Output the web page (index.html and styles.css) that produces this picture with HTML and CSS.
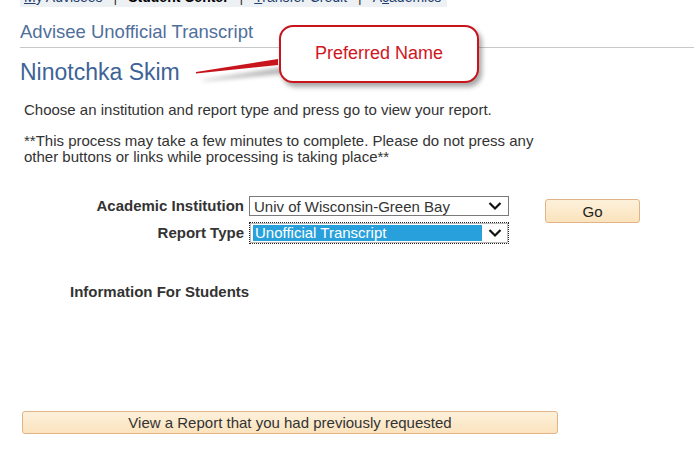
FILE: index.html
```html
<!DOCTYPE html>
<html>
<head>
<meta charset="utf-8">
<link rel="stylesheet" href="styles.css">
</head>
<body>
<div class="page">
  <div class="nav">
    <div class="nav-inner">
      <span><u>M</u>y Advisees</span><span class="sep">|</span><b>Student Center</b><span class="sep">|</span><span><u>T</u>ransfer Credit</span><span class="sep">|</span><span>A<u>c</u>ademics</span>
    </div>
  </div>
  <div class="title">Advisee Unofficial Transcript</div>
  <div class="name">Ninotchka Skim</div>
  <p class="intro">Choose an institution and report type and press go to view your report.</p>
  <p class="warn">**This process may take a few minutes to complete. Please do not press any other buttons or links while processing is taking place**</p>

  <div class="form">
    <div class="label">Academic Institution</div>
    <div class="select">
      <span class="val">Univ of Wisconsin-Green Bay</span>
      <svg class="chev" width="14" height="10" viewBox="0 0 14 10"><path d="M1.5 2 L7 7.5 L12.5 2" fill="none" stroke="#111" stroke-width="2.2"/></svg>
    </div>
    <div class="go">Go</div>
    <div class="label">Report Type</div>
    <div class="select focus">
      <span class="val sel">Unofficial Transcript</span>
      <svg class="chev" width="14" height="10" viewBox="0 0 14 10"><path d="M1.5 2 L7 7.5 L12.5 2" fill="none" stroke="#111" stroke-width="2.2"/></svg>
    </div>
  </div>

  <div class="info">Information For Students</div>
  <div class="view-btn">View a Report that you had previously requested</div>

  <svg class="pointer" width="100" height="40" viewBox="0 0 100 40">
    <defs>
      <filter id="sh" x="-20%" y="-50%" width="140%" height="300%"><feGaussianBlur stdDeviation="2"/></filter>
    </defs>
    <polygon points="4,30 84,17 84,24 4,31" fill="#888" opacity="0.6" filter="url(#sh)" transform="translate(3,5)"/>
    <polygon points="0,27 82,14 82,20 0,28.5" fill="#c8141c"/>
  </svg>
  <div class="callout">Preferred Name</div>
</div>
</body>
</html>
```
FILE: styles.css
```css
html, body {
  margin: 0;
  padding: 0;
  background: #fff;
}
body {
  font-family: "Liberation Sans", Arial, sans-serif;
  color: #333;
}
.page {
  position: relative;
  width: 694px;
  height: 460px;
  overflow: hidden;
}
.nav {
  margin-left: 20px;
  width: 427px;
  height: 7px;
  background: #eef1f4;
  overflow: hidden;
}
.nav-inner {
  margin-top: -11px;
  padding-left: 4px;
  font-size: 14px;
  line-height: 16px;
  color: #1f3f6f;
  white-space: nowrap;
}
.nav-inner b { color: #000; }
.nav-inner .sep { margin: 0 11px; color: #333; }
.title {
  margin: 14px 0 0 20px;
  font-size: 18.5px;
  line-height: 21px;
  color: #4f6f9c;
  padding-bottom: 5px;
  border-bottom: 1px solid #c8c8c8;
}
.name {
  margin: 12px 0 0 20px;
  font-size: 23px;
  line-height: 24px;
  color: #3e6396;
}
.intro {
  margin: 18px 0 0 24px;
  font-size: 15px;
  line-height: 16px;
}
.warn {
  margin: 15px 0 0 24px;
  width: 515px;
  font-size: 15px;
  line-height: 16px;
}
.form {
  margin-top: 31px;
  display: grid;
  grid-template-columns: 244px 260px 95px;
  grid-template-rows: 20px 22px;
  column-gap: 5px;
  row-gap: 6px;
  align-items: center;
}
.label {
  text-align: right;
  font-weight: bold;
  font-size: 15px;
  line-height: 18px;
  color: #333;
}
.select {
  position: relative;
  height: 20px;
  box-sizing: border-box;
  border: 1px solid #7a7a7a;
  background: #fff;
  display: flex;
  align-items: center;
  padding-left: 4px;
  font-size: 15px;
  color: #333;
}
.select.focus {
  height: 22px;
  border: 1px dotted #222;
  outline: 1px solid #bbb;
  outline-offset: -2px;
  padding-left: 3px;
}
.val.sel {
  background: #27a0dc;
  color: #fff;
  width: 227px;
  height: 16px;
  line-height: 16px;
  padding-left: 2px;
}
.chev {
  position: absolute;
  right: 6px;
  top: 50%;
  margin-top: -5px;
}
.go {
  grid-column: 3;
  grid-row: 1 / span 2;
  align-self: start;
  margin: 3px 0 0 31px;
  width: 95px;
  height: 24px;
  box-sizing: border-box;
  border: 1px solid #e0b486;
  border-radius: 3px;
  background: linear-gradient(#fdf1db, #fbe3bd);
  display: flex;
  align-items: center;
  justify-content: center;
  font-size: 15px;
  color: #222;
}
.info {
  margin: 39px 0 0 70px;
  font-weight: bold;
  font-size: 15px;
  line-height: 18px;
  color: #333;
}
.view-btn {
  margin: 110px 0 0 22px;
  width: 536px;
  height: 23px;
  box-sizing: border-box;
  border: 1px solid #e0b486;
  border-radius: 3px;
  background: linear-gradient(#fdf1db, #fbe3bd);
  display: flex;
  align-items: center;
  justify-content: center;
  font-size: 15px;
  color: #333;
}
.pointer {
  position: absolute;
  left: 196px;
  top: 45px;
}
.callout {
  position: absolute;
  left: 279px;
  top: 25px;
  width: 200px;
  height: 58px;
  box-sizing: border-box;
  border: 2px solid #c8141c;
  border-radius: 14px;
  background: #fff;
  box-shadow: 3px 4px 5px rgba(0,0,0,0.35);
  display: flex;
  align-items: center;
  justify-content: center;
  padding-bottom: 2px;
  font-size: 18px;
  color: #d0161e;
}
```
